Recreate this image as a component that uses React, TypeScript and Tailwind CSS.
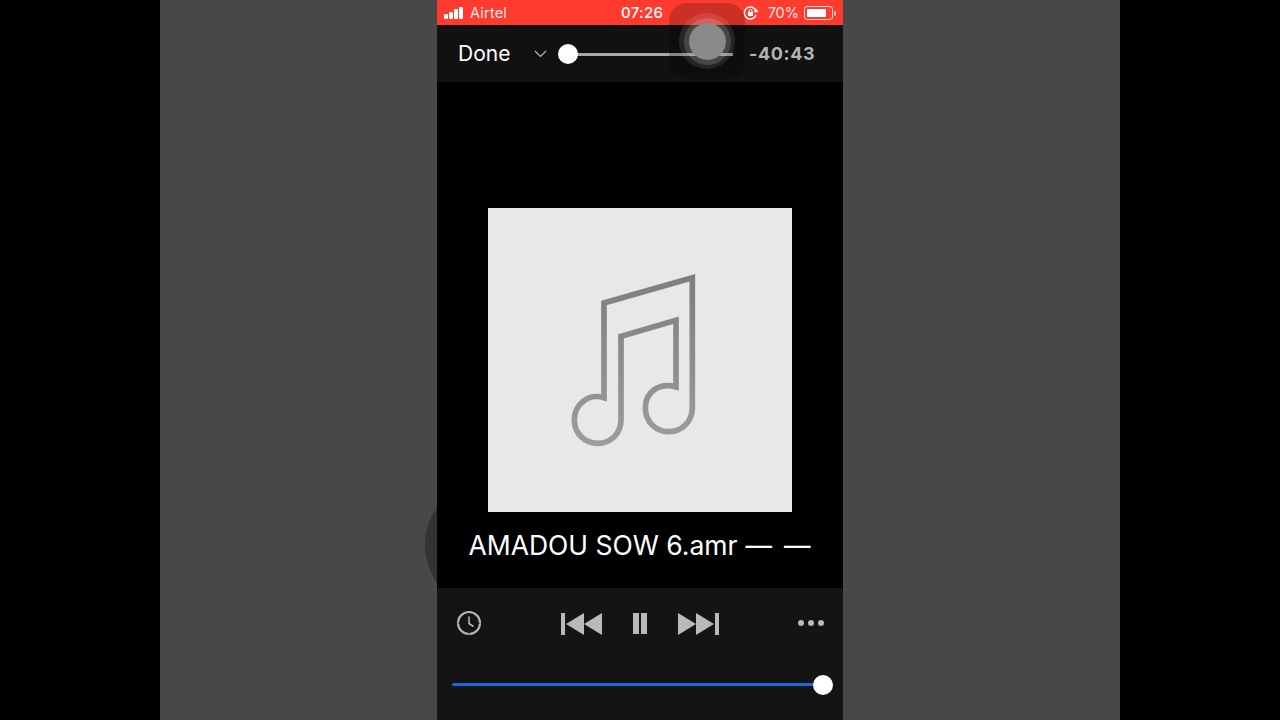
import React from "react";

const SignalBars = () => (
  <div className="flex items-end gap-[1px] w-[22px] h-[12px]">
    <div className="w-[4px] h-[5px] bg-white rounded-[1px]" />
    <div className="w-[4px] h-[7px] bg-white rounded-[1px]" />
    <div className="w-[4px] h-[10px] bg-white rounded-[1px]" />
    <div className="w-[4px] h-[12px] bg-white rounded-[1px]" />
  </div>
);

const MusicNote = () => (
  <svg width="170" height="195" viewBox="0 0 510 585" fill="none">
    <defs>
      <linearGradient id="noteFade" x1="0" y1="40" x2="0" y2="555" gradientUnits="userSpaceOnUse">
        <stop offset="0" stopColor="#7e7e7e" />
        <stop offset="1" stopColor="#9c9c9c" />
      </linearGradient>
    </defs>
    <path
      d="M162 410 V126 L427 50 V440 C427 482 395 512 355 512 C315 512 286 480 286 440 C286 395 325 363 378 378 V178 L213 226 V477 C213 517 182 547 143 547 C103 547 73 516 73 477 C73 430 115 396 162 410 Z"
      stroke="url(#noteFade)"
      strokeWidth="17"
      strokeLinejoin="miter"
    />
  </svg>
);

const ClockIcon = () => (
  <svg width="26" height="26" viewBox="0 0 26 26" fill="none" stroke="#b4b4b4">
    <circle cx="13" cy="13" r="11" strokeWidth="2.2" />
    <path d="M13 6.5 V13.5 L17.5 16.5" strokeWidth="1.6" />
    <path d="M13 22 V24.5 M1.5 13 H4 M22 13 H24.5" strokeWidth="0.6" stroke="#141414" />
  </svg>
);

const PrevIcon = () => (
  <svg width="41" height="22" viewBox="0 0 41 22" fill="#b9b9b9">
    <rect x="0" y="0" width="4" height="22" />
    <path d="M5 11 L23 0 V22 Z" />
    <path d="M23 11 L41 0 V22 Z" />
  </svg>
);

const NextIcon = () => (
  <svg width="41" height="22" viewBox="0 0 41 22" fill="#b9b9b9">
    <path d="M0 0 L18 11 L0 22 Z" />
    <path d="M18 0 L36 11 L18 22 Z" />
    <rect x="37" y="0" width="4" height="22" />
  </svg>
);

export default function App() {
  return (
    <div
      className="relative w-[1280px] h-[720px] bg-black flex justify-center overflow-hidden"
      style={{ fontFamily: "Inter, 'Liberation Sans', sans-serif" }}
    >
      <div className="relative w-[960px] h-full bg-[#484848] flex justify-center">
        {/* shadow of the hand behind the phone */}
        <div className="absolute left-[265px] top-[479px] w-[132px] h-[132px] rounded-full bg-[#333333]" />

        <div className="relative w-[406px] h-full flex flex-col bg-black">
          <div className="h-[25px] pt-[1px] bg-[#ff3b30] flex items-center px-[7px] text-white text-[14px] relative">
            <SignalBars />
            <span className="ml-[4px] text-[14.5px] text-[#ffe9e7] tracking-[0.2px]">Airtel</span>
            <span className="absolute left-[184px] font-medium text-[15px] tracking-[0.3px]">07:26</span>
            <div className="ml-auto flex items-center">
              <svg width="16" height="14" viewBox="0 0 16 14" fill="none" stroke="#fff" strokeWidth="1.4">
                <path d="M13 9 A6 6 0 1 1 13 5" />
                <path d="M11 6 L15 6 L13.5 3 Z" fill="#fff" strokeWidth="0.5" />
                <rect x="5" y="6" width="5" height="4" fill="#fff" stroke="none" />
                <path d="M6 6 V5 A1.5 1.5 0 0 1 9 5 V6" strokeWidth="1" />
              </svg>
              <span className="ml-[9px] text-[14.5px] text-[#ffe9e7]">70%</span>
              <div className="ml-[5px] w-[29px] h-[14px] border border-white/80 rounded-[3px] p-[2px]">
                <div className="w-[19px] h-full bg-white rounded-[1px]" />
              </div>
              <div className="w-[2px] h-[5px] ml-[1px] bg-[#ffb0aa] rounded-r-[1px]" />
            </div>
          </div>

          <div className="h-[57px] pt-[1px] bg-[#111111] flex items-center relative">
            <span className="ml-[21px] w-[76px] text-white text-[21px]">Done</span>
            <svg width="13" height="8" viewBox="0 0 13 8" fill="none" stroke="#b5b5b5" strokeWidth="1.2">
              <path d="M1 1 L6.5 6.5 L12 1" />
            </svg>
            <div className="ml-[12px] w-[174px] h-[3px] bg-[#a9a9a9] relative">
              <div className="absolute -left-[1px] -top-[9px] w-[20px] h-[20px] rounded-full bg-white" />
            </div>
            <span className="ml-[16px] -mt-[1px] text-[#b3b3b3] text-[18px] font-bold tracking-[0.6px]">-40:43</span>
          </div>

          <div className="flex-1 bg-black flex flex-col items-center pt-[126px]">
            <div className="w-[304px] h-[304px] bg-[#e8e8e8] flex items-center justify-center">
              <div className="mt-[-4px] ml-[-11px]">
                <MusicNote />
              </div>
            </div>
            <div className="mt-[16px] -ml-[1px] text-white text-[26.5px] leading-[34px] whitespace-nowrap">
              AMADOU SOW 6.amr<span className="ml-[8px] mr-[12px]">—</span>—
            </div>
          </div>

          <div className="h-[132px] bg-[#141414] flex flex-col">
            <div className="h-[71px] relative flex items-center justify-center">
              <div className="absolute left-[19px] top-[22px]">
                <ClockIcon />
              </div>
              <div className="flex items-center gap-[31px]">
                <PrevIcon />
                <div className="flex gap-[2px]">
                  <div className="w-[6px] h-[21px] bg-[#b9b9b9]" />
                  <div className="w-[6px] h-[21px] bg-[#b9b9b9]" />
                </div>
                <NextIcon />
              </div>
              <div className="absolute right-[19px] top-[32px] flex gap-[4px]">
                <div className="w-[6px] h-[6px] rounded-full bg-[#b9b9b9]" />
                <div className="w-[6px] h-[6px] rounded-full bg-[#b9b9b9]" />
                <div className="w-[6px] h-[6px] rounded-full bg-[#b9b9b9]" />
              </div>
            </div>
            <div className="mt-[24px] ml-[15px] w-[371px] h-[3px] bg-[#1a68e0] rounded-full relative">
              <div className="absolute right-[-10px] -top-[8.5px] w-[20px] h-[20px] rounded-full bg-white" />
            </div>
          </div>

          {/* assistive touch button floating over the bars */}
          <div className="absolute left-[232px] top-[3px] w-[76px] h-[76px] rounded-[18px] bg-black/20 flex items-center justify-center">
            <div className="w-[56px] h-[56px] rounded-full bg-white/10 blur-[0.5px] flex items-center justify-center">
              <div className="w-[47px] h-[47px] rounded-full bg-white/15 flex items-center justify-center">
                <div className="w-[37px] h-[37px] rounded-full bg-[#8a8a8a]" />
              </div>
            </div>
          </div>
        </div>
      </div>
    </div>
  );
}
